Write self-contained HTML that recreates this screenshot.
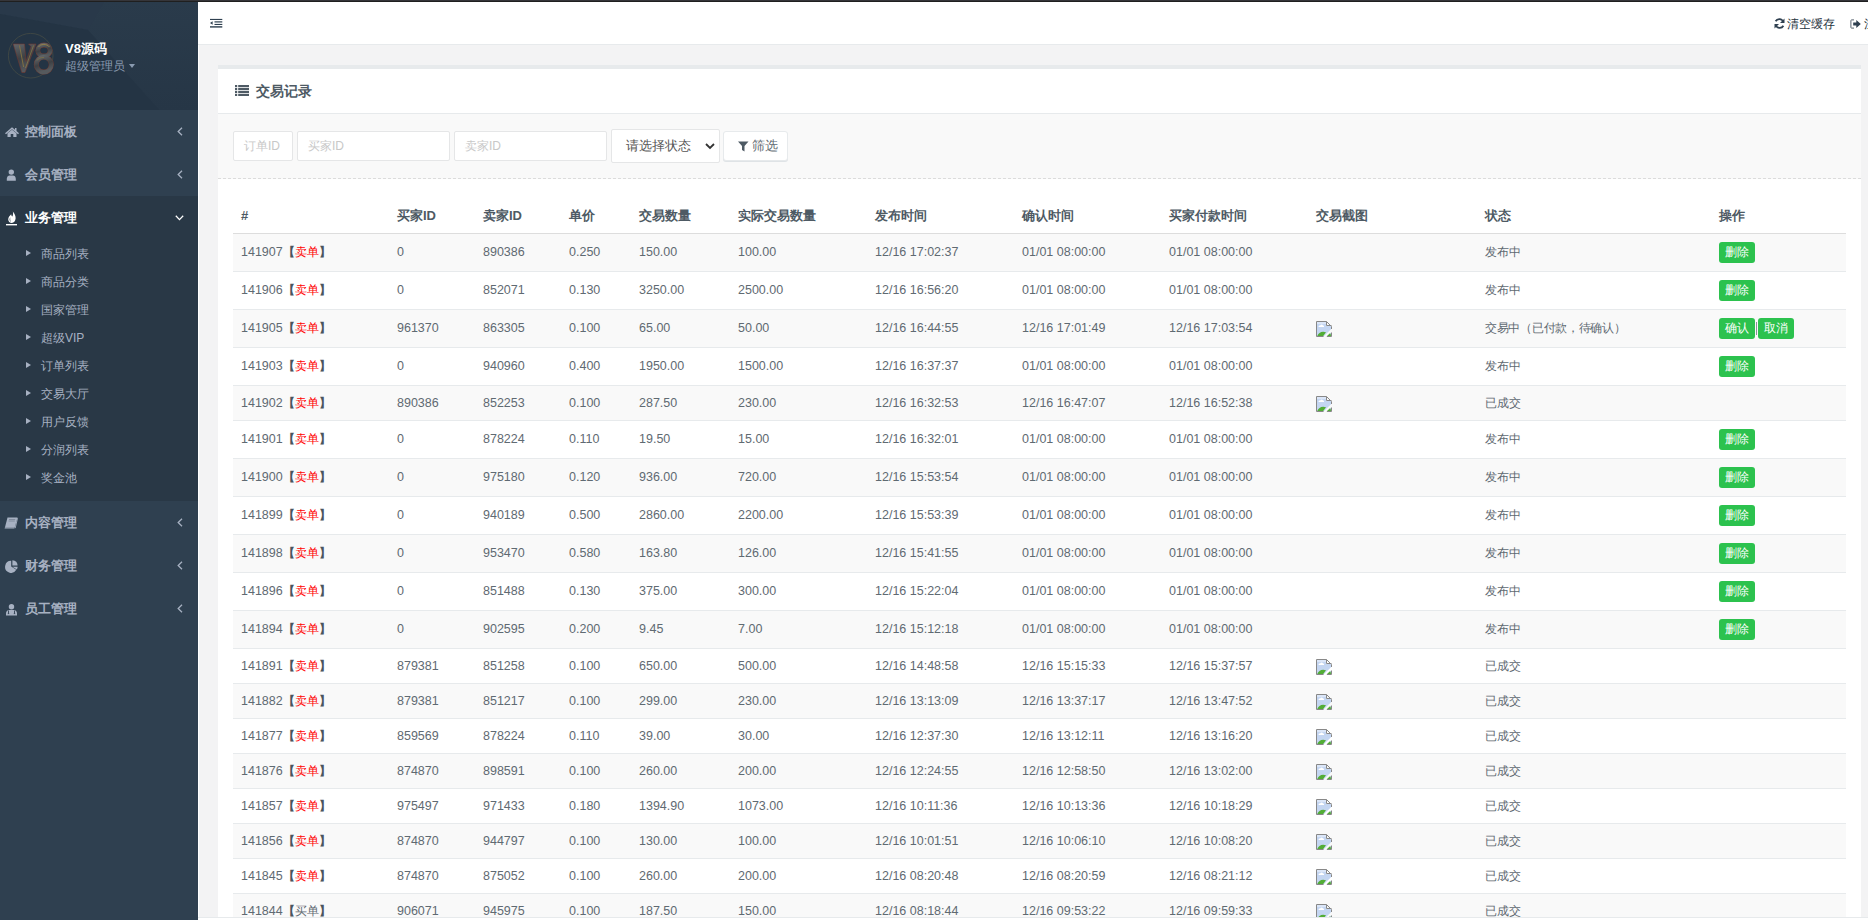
<!DOCTYPE html>
<html>
<head>
<meta charset="utf-8">
<style>
*{box-sizing:border-box;}
html,body{margin:0;padding:0;width:1868px;height:920px;overflow:hidden;background:#f3f3f4;font-family:"Liberation Sans",sans-serif;font-size:13px;color:#676a6c;}
#topline{position:absolute;left:0;top:0;width:1868px;height:2px;background:#1f1f1f;border-top:1px solid #353539;z-index:10;}
#side{position:absolute;left:0;top:0;width:198px;height:920px;background:#2f4050;}
#sidehead{position:absolute;left:0;top:0;width:198px;height:110px;background:#253545;overflow:hidden;}
#nav{position:absolute;left:198px;top:0;width:1670px;height:45px;background:#fff;border-bottom:1px solid #e7eaec;}
#wline{position:absolute;left:198px;top:45px;width:1px;height:875px;background:#fff;}
#footer{position:absolute;left:198px;top:917px;width:1670px;height:3px;background:#fff;border-top:1px solid #e7eaec;z-index:5;}
.menu{position:absolute;left:0;width:198px;height:43px;}
.menu .t{position:absolute;left:25px;top:0;line-height:43px;font-size:13px;font-weight:bold;color:#a7b1c2;}
.menu .ar{position:absolute;left:177px;top:17px;}
.menu .ic{position:absolute;left:5px;top:15px;}
#sub{position:absolute;left:0;top:196px;width:198px;height:305px;background:#293846;}
.si{position:absolute;left:0;width:198px;height:28px;}
.si .tri{position:absolute;left:26px;top:11px;width:0;height:0;border-left:5px solid #a7b1c2;border-top:3.5px solid transparent;border-bottom:3.5px solid transparent;}
.si .t{position:absolute;left:41px;top:1px;line-height:28px;font-size:12px;color:#a7b1c2;}
#card{position:absolute;left:218px;top:65px;width:1643px;height:860px;background:#fff;border-top:4px solid #e7eaec;}
#ctitle{position:absolute;left:0;top:0;width:100%;height:45px;border-bottom:1px solid #e7eaec;}
#ctitle .t{position:absolute;left:38px;top:0;line-height:44px;font-size:14px;font-weight:bold;color:#4e5a64;}
#filter{position:absolute;left:0;top:45px;width:100%;height:65px;background:#f9f9f9;border-bottom:1px dashed #dcdcdc;}
.inp{position:absolute;top:17px;height:30px;background:#fff;border:1px solid #e5e6e7;border-radius:2px;font-size:12px;color:#c8c8c8;padding-left:10px;line-height:28px;}
.sel{position:absolute;top:15px;height:34px;background:#fff;border:1px solid #e5e6e7;border-radius:2px;font-size:13px;color:#555;padding-left:14px;line-height:31px;}
.fbtn{position:absolute;top:17px;height:30px;background:#fff;border:1px solid #e7eaec;border-radius:3px;font-size:13px;color:#5f6a72;line-height:28px;box-shadow:0 1px 0 #dfe3e6;}
.thead .th{position:absolute;top:197px;line-height:38px;font-weight:bold;color:#4e5a64;white-space:nowrap;}
#hline{position:absolute;left:233px;top:233px;width:1613px;height:1px;background:#dddddd;}
.row{position:absolute;left:233px;width:1613px;border-bottom:1px solid #e7eaec;background:#fff;}
.row.odd{background:#f9f9f9;}
.td{position:absolute;top:0;white-space:nowrap;color:#5f6a72;font-size:12.5px;}
.cj{font-size:12px;}
.bk{font-weight:bold;color:#4a555e;}

.red{color:#ff0000;}
.btn{display:inline-block;height:21px;line-height:21px;padding:0 6px;background:#2cc24e;color:#fff;font-size:12px;border-radius:3px;vertical-align:middle;}
.sep{display:inline-block;width:1px;height:13px;background:#8a9098;margin:0 1px 0 1px;vertical-align:middle;}
.bi{display:inline-block;width:16px;height:16px;vertical-align:middle;}
</style>
</head>
<body>
<div id="side">
  <div id="sidehead">
    <svg width="198" height="110" style="position:absolute;left:0;top:0">
      <defs><linearGradient id="hg" x1="0" y1="0" x2="0" y2="1"><stop offset="0" stop-color="#2a3b4b"/><stop offset="1" stop-color="#263646"/></linearGradient></defs>
      <rect x="0" y="0" width="198" height="110" fill="url(#hg)"/>
      <polygon points="0,0 105,0 88,30 0,14" fill="#29394a"/>
      <polygon points="0,14 88,30 159,110 0,110" fill="#243444"/>
    </svg>
    <svg width="60" height="60" viewBox="0 0 60 60" style="position:absolute;left:0;top:25px">
<defs><linearGradient id="lg" x1="0" y1="0" x2="0.3" y2="1"><stop offset="0" stop-color="#62666a"/><stop offset="0.55" stop-color="#3d4044"/><stop offset="1" stop-color="#55595d"/></linearGradient></defs>
<circle cx="30.7" cy="30.7" r="22.3" fill="none" stroke="#454b45" stroke-width="0.8"/>
<path d="M13.2 19H24.5L26 36.5L31 21.5L28.5 19H36L25 47.5H21.8Z" fill="url(#lg)" stroke="#7d352b" stroke-width="0.5"/>
<path d="M19.5 20.5L23.6 42" stroke="#8f7a3e" stroke-width="0.8"/>
<path d="M33.5 20.5L25.5 43" stroke="#a08640" stroke-width="0.6"/>
<ellipse cx="44" cy="25.5" rx="6.2" ry="5.5" fill="none" stroke="#6e3a30" stroke-width="4.8"/>
<ellipse cx="43.8" cy="39.6" rx="7.5" ry="7.5" fill="none" stroke="#6e3a30" stroke-width="5"/>
<ellipse cx="44" cy="25.5" rx="6.2" ry="5.5" fill="none" stroke="url(#lg)" stroke-width="4"/>
<ellipse cx="43.8" cy="39.6" rx="7.5" ry="7.5" fill="none" stroke="url(#lg)" stroke-width="4.2"/>
<path d="M38.5 22C40 18.8 47 18.5 49.5 22" fill="none" stroke="#a08640" stroke-width="0.8"/>
<path d="M37 35.5C38.5 33 41 32.5 44 32.5" fill="none" stroke="#8f7a3e" stroke-width="0.6"/>
</svg>
    <div style="position:absolute;left:65px;top:40px;font-size:13px;font-weight:bold;color:#fff;">V8源码</div>
    <div style="position:absolute;left:65px;top:58px;font-size:12px;color:#8a9bb0;">超级管理员</div>
    <div style="position:absolute;left:129px;top:64px;width:0;height:0;border-left:3.5px solid transparent;border-right:3.5px solid transparent;border-top:4px solid #8a9bb0;"></div>
  </div>
  <div class="menu" style="top:110px"><svg class="ic" width="14" height="11" viewBox="0 0 14 11" style="left:5px;top:17px"><path d="M7 0.3L0 6.2L1 7.2L7 2.2L13 7.2L14 6.2L11.5 4V1H10V2.8Z" fill="#a7b1c2"/><path d="M2.5 6.3L7 2.8L11.5 6.3V10H8.3V7H5.7V10H2.5Z" fill="#a7b1c2"/></svg><span class="t">控制面板</span><svg class="ar" width="6" height="9" viewBox="0 0 6 9"><path d="M5 0.8L1.2 4.5L5 8.2" fill="none" stroke="#a7b1c2" stroke-width="1.3"/></svg></div>
  <div class="menu" style="top:153px"><svg class="ic" width="11" height="12" viewBox="0 0 11 12" style="left:6px;top:16px"><circle cx="5.3" cy="3.1" r="2.7" fill="#a7b1c2"/><path d="M0.8 11.8V9.8C0.8 7.6 2.2 6.4 3.6 6.4H7C8.4 6.4 9.8 7.6 9.8 9.8V11.8Z" fill="#a7b1c2"/></svg><span class="t">会员管理</span><svg class="ar" width="6" height="9" viewBox="0 0 6 9"><path d="M5 0.8L1.2 4.5L5 8.2" fill="none" stroke="#a7b1c2" stroke-width="1.3"/></svg></div>
  <div id="sub"></div>
  <div class="menu" style="top:196px"><svg class="ic" width="12" height="15" viewBox="0 0 12 15" style="left:6px;top:15px"><path d="M6.8 0.5C8.8 2.8 9.8 5 9.6 7.6C9.4 10.2 7.8 11.9 5.8 11.9C3.9 11.9 2.2 10.4 2.2 8.2C2.2 5.8 4.2 4.5 5.2 3.2C5.2 4.3 5.8 5.1 6.4 5.6C7.2 4 7.3 2.2 6.8 0.5Z" fill="#fff"/><path d="M4.3 6.2C3.3 7.6 3.2 9.8 5 11.3C4.1 9.6 4.1 7.8 4.3 6.2Z" fill="#293846"/><rect x="0" y="13" width="11" height="1.4" fill="#fff"/></svg><span class="t" style="color:#fff">业务管理</span><svg class="ar" width="9" height="6" viewBox="0 0 9 6" style="left:175px;top:19px"><path d="M0.8 0.8L4.5 4.6L8.2 0.8" fill="none" stroke="#fff" stroke-width="1.3"/></svg></div>
  <div class="si" style="top:239px"><span class="tri"></span><span class="t">商品列表</span></div>
  <div class="si" style="top:267px"><span class="tri"></span><span class="t">商品分类</span></div>
  <div class="si" style="top:295px"><span class="tri"></span><span class="t">国家管理</span></div>
  <div class="si" style="top:323px"><span class="tri"></span><span class="t">超级VIP</span></div>
  <div class="si" style="top:351px"><span class="tri"></span><span class="t">订单列表</span></div>
  <div class="si" style="top:379px"><span class="tri"></span><span class="t">交易大厅</span></div>
  <div class="si" style="top:407px"><span class="tri"></span><span class="t">用户反馈</span></div>
  <div class="si" style="top:435px"><span class="tri"></span><span class="t">分润列表</span></div>
  <div class="si" style="top:463px"><span class="tri"></span><span class="t">奖金池</span></div>
  <div class="menu" style="top:501px"><svg class="ic" width="14" height="12" viewBox="0 0 14 12" style="left:4px;top:16px"><path d="M3.5 0.5H13.5L10.8 10.2H1Z" fill="#a7b1c2"/><path d="M1 10.2H10.8L10.3 11.5H0.6Z" fill="#a7b1c2"/><path d="M5 2.5H11.2M4.6 4H10.8" stroke="#7d8899" stroke-width="0.9"/><path d="M13.5 1.2L11.2 11.2" stroke="#a7b1c2" stroke-width="0.9"/></svg><span class="t">内容管理</span><svg class="ar" width="6" height="9" viewBox="0 0 6 9"><path d="M5 0.8L1.2 4.5L5 8.2" fill="none" stroke="#a7b1c2" stroke-width="1.3"/></svg></div>
  <div class="menu" style="top:544px"><svg class="ic" width="14" height="13" viewBox="0 0 14 13" style="left:5px;top:16px"><path d="M6.2 0.8A6 6 0 1 0 11.3 9.8L6.2 6.6Z" fill="#a7b1c2"/><path d="M7.4 0.2V5.6L12.6 5.6A5.6 5.6 0 0 0 7.4 0.2Z" fill="#a7b1c2"/><path d="M7.4 6.8L12.6 6.8A5.6 5.6 0 0 1 11.8 9.6Z" fill="#a7b1c2"/></svg><span class="t">财务管理</span><svg class="ar" width="6" height="9" viewBox="0 0 6 9"><path d="M5 0.8L1.2 4.5L5 8.2" fill="none" stroke="#a7b1c2" stroke-width="1.3"/></svg></div>
  <div class="menu" style="top:587px"><svg class="ic" width="11" height="12" viewBox="0 0 11 12" style="left:6px;top:17px"><circle cx="5.5" cy="2.8" r="2.7" fill="#a7b1c2"/><path d="M0 11.5V9.3C0 7.3 1.5 6 3 6H8C9.5 6 11 7.3 11 9.3V11.5Z" fill="#a7b1c2"/><path d="M2.5 6.5V9.5M8.5 6.5V9.5M1.8 9.6H3.2M7.8 9.6H9.2" stroke="#2f4050" stroke-width="0.9" fill="none"/></svg><span class="t">员工管理</span><svg class="ar" width="6" height="9" viewBox="0 0 6 9"><path d="M5 0.8L1.2 4.5L5 8.2" fill="none" stroke="#a7b1c2" stroke-width="1.3"/></svg></div>
</div>
<div id="topline"></div>
<div id="nav">
  <svg width="13" height="11" viewBox="0 0 13 11" style="position:absolute;left:12px;top:18px"><rect x="0" y="0.9" width="12.3" height="1.1" fill="#2f4050"/><rect x="4.5" y="3.3" width="7.8" height="1.2" fill="#2f4050"/><rect x="4.5" y="5.9" width="7.8" height="1.1" fill="#2f4050"/><rect x="0" y="8.2" width="12.3" height="1.4" fill="#2f4050"/><path d="M0 5L2.6 3.2V6.8Z" fill="#2f4050"/></svg>
  <svg width="11" height="11" viewBox="0 0 11 11" style="position:absolute;left:1576px;top:18px"><path d="M9.2 3.8A4.2 4.2 0 0 0 1.6 3.2" fill="none" stroke="#2f4050" stroke-width="1.8"/><path d="M10.5 0.5V5H6Z" fill="#2f4050"/><path d="M1.8 7.2A4.2 4.2 0 0 0 9.4 7.8" fill="none" stroke="#2f4050" stroke-width="1.8"/><path d="M0.5 10.5V6H5Z" fill="#2f4050"/></svg>
  <svg width="11" height="10" viewBox="0 0 11 10" style="position:absolute;left:1652px;top:19px"><path d="M4 0.9H1.5C1.1 0.9 0.9 1.1 0.9 1.5V8.5C0.9 8.9 1.1 9.1 1.5 9.1H4" fill="none" stroke="#5a6570" stroke-width="1"/><path d="M3.2 3.6H6.3V1L10.8 5L6.3 9V6.4H3.2Z" fill="#2f4050"/></svg>
  <div style="position:absolute;left:1666px;top:2px;line-height:45px;font-size:12px;color:#263340;white-space:nowrap;">注销</div>
  <div style="position:absolute;left:1589px;top:2px;line-height:45px;font-size:12px;color:#263340;white-space:nowrap;">清空缓存</div>
</div>
<div id="wline"></div>
<div id="card">
  <div id="ctitle"><svg width="14" height="11" viewBox="0 0 14 11" style="position:absolute;left:17px;top:16px"><rect x="0" y="0" width="2.2" height="2.2" fill="#4e5a64"/><rect x="3.2" y="0" width="10.8" height="2.2" fill="#4e5a64"/><rect x="0" y="3" width="2.2" height="2.2" fill="#4e5a64"/><rect x="3.2" y="3" width="10.8" height="2.2" fill="#4e5a64"/><rect x="0" y="6" width="2.2" height="2.2" fill="#4e5a64"/><rect x="3.2" y="6" width="10.8" height="2.2" fill="#4e5a64"/><rect x="0" y="9" width="2.2" height="2.2" fill="#4e5a64"/><rect x="3.2" y="9" width="10.8" height="2.2" fill="#4e5a64"/></svg><span class="t">交易记录</span></div>
  <div id="filter">
    <div class="inp" style="left:15px;width:60px;">订单ID</div>
    <div class="inp" style="left:79px;width:153px;">买家ID</div>
    <div class="inp" style="left:236px;width:153px;">卖家ID</div>
    <div class="sel" style="left:393px;width:109px;">请选择状态<svg width="10" height="7" viewBox="0 0 10 7" style="position:absolute;left:93px;top:13px"><path d="M1 1L5 5L9 1" fill="none" stroke="#333" stroke-width="1.8"/></svg></div>
    <div class="fbtn" style="left:505px;width:65px;"><svg width="11" height="11" viewBox="0 0 11 11" style="position:absolute;left:14px;top:9px"><path d="M0 0.5H10.5L6.5 5V10.5L4 9V5Z" fill="#4e5a64"/></svg><span style="position:absolute;left:28px;top:0;">筛选</span></div>
  </div>
</div>
<div class="thead">
<div class="th" style="left:241px">#</div>
<div class="th" style="left:397px">买家ID</div>
<div class="th" style="left:483px">卖家ID</div>
<div class="th" style="left:569px">单价</div>
<div class="th" style="left:639px">交易数量</div>
<div class="th" style="left:738px">实际交易数量</div>
<div class="th" style="left:875px">发布时间</div>
<div class="th" style="left:1022px">确认时间</div>
<div class="th" style="left:1169px">买家付款时间</div>
<div class="th" style="left:1316px">交易截图</div>
<div class="th" style="left:1485px">状态</div>
<div class="th" style="left:1719px">操作</div>
</div>
<div class="row odd" style="top:234px;height:38px">
<div class="td" style="left:8px;line-height:37px">141907<span class="cj"><span class="bk">【</span><span class="red">卖单</span><span class="bk">】</span></span></div>
<div class="td" style="left:164px;line-height:37px">0</div>
<div class="td" style="left:250px;line-height:37px">890386</div>
<div class="td" style="left:336px;line-height:37px">0.250</div>
<div class="td" style="left:406px;line-height:37px">150.00</div>
<div class="td" style="left:505px;line-height:37px">100.00</div>
<div class="td" style="left:642px;line-height:37px">12/16 17:02:37</div>
<div class="td" style="left:789px;line-height:37px">01/01 08:00:00</div>
<div class="td" style="left:936px;line-height:37px">01/01 08:00:00</div>
<div class="td" style="left:1083px;line-height:37px"></div>
<div class="td" style="left:1252px;line-height:37px"><span class="cj">发布中</span></div>
<div class="td" style="left:1486px;line-height:37px"><span class="btn">删除</span></div>
</div>
<div class="row" style="top:272px;height:38px">
<div class="td" style="left:8px;line-height:37px">141906<span class="cj"><span class="bk">【</span><span class="red">卖单</span><span class="bk">】</span></span></div>
<div class="td" style="left:164px;line-height:37px">0</div>
<div class="td" style="left:250px;line-height:37px">852071</div>
<div class="td" style="left:336px;line-height:37px">0.130</div>
<div class="td" style="left:406px;line-height:37px">3250.00</div>
<div class="td" style="left:505px;line-height:37px">2500.00</div>
<div class="td" style="left:642px;line-height:37px">12/16 16:56:20</div>
<div class="td" style="left:789px;line-height:37px">01/01 08:00:00</div>
<div class="td" style="left:936px;line-height:37px">01/01 08:00:00</div>
<div class="td" style="left:1083px;line-height:37px"></div>
<div class="td" style="left:1252px;line-height:37px"><span class="cj">发布中</span></div>
<div class="td" style="left:1486px;line-height:37px"><span class="btn">删除</span></div>
</div>
<div class="row odd" style="top:310px;height:38px">
<div class="td" style="left:8px;line-height:37px">141905<span class="cj"><span class="bk">【</span><span class="red">卖单</span><span class="bk">】</span></span></div>
<div class="td" style="left:164px;line-height:37px">961370</div>
<div class="td" style="left:250px;line-height:37px">863305</div>
<div class="td" style="left:336px;line-height:37px">0.100</div>
<div class="td" style="left:406px;line-height:37px">65.00</div>
<div class="td" style="left:505px;line-height:37px">50.00</div>
<div class="td" style="left:642px;line-height:37px">12/16 16:44:55</div>
<div class="td" style="left:789px;line-height:37px">12/16 17:01:49</div>
<div class="td" style="left:936px;line-height:37px">12/16 17:03:54</div>
<div class="td" style="left:1083px;line-height:37px"><svg class="bi" width="16" height="16" viewBox="0 0 16 16"><path d="M1 1H10V5H15V8.3L7.5 15.5H1Z" fill="#c4d6f2"/><path d="M1 1H10V3H1Z" fill="#dbe6f8"/><path d="M15 11.5V15H11.5Z" fill="#c4d6f2"/><path d="M2.5 6C2.5 4.8 3.5 4.5 4.2 4.6C4.6 3.2 6.5 3.2 7 4.6C7.8 4.6 8.3 5.3 8 6Z" fill="#fff"/><path d="M1 15.5C2.5 11.5 6 9.8 10 11.3L6.8 15.5Z" fill="#52ad35"/><path d="M10.5 15.5L14 12.3C14.6 13 15 14 15 15.5Z" fill="#52ad35"/><path d="M7.5 15.5H0.5V0.5H10.5L15.5 5.5V8" fill="none" stroke="#888" stroke-width="1"/><path d="M15.5 11.5V15.5H11" fill="none" stroke="#888" stroke-width="1"/><path d="M10.5 0.5V4.5H15.5" fill="none" stroke="#888" stroke-width="1"/></svg></div>
<div class="td" style="left:1252px;line-height:37px"><span class="cj" style="letter-spacing:-0.3px">交易中（已付款，待确认）</span></div>
<div class="td" style="left:1486px;line-height:37px"><span class="btn">确认</span><span class="sep"></span><span class="btn">取消</span></div>
</div>
<div class="row" style="top:348px;height:38px">
<div class="td" style="left:8px;line-height:37px">141903<span class="cj"><span class="bk">【</span><span class="red">卖单</span><span class="bk">】</span></span></div>
<div class="td" style="left:164px;line-height:37px">0</div>
<div class="td" style="left:250px;line-height:37px">940960</div>
<div class="td" style="left:336px;line-height:37px">0.400</div>
<div class="td" style="left:406px;line-height:37px">1950.00</div>
<div class="td" style="left:505px;line-height:37px">1500.00</div>
<div class="td" style="left:642px;line-height:37px">12/16 16:37:37</div>
<div class="td" style="left:789px;line-height:37px">01/01 08:00:00</div>
<div class="td" style="left:936px;line-height:37px">01/01 08:00:00</div>
<div class="td" style="left:1083px;line-height:37px"></div>
<div class="td" style="left:1252px;line-height:37px"><span class="cj">发布中</span></div>
<div class="td" style="left:1486px;line-height:37px"><span class="btn">删除</span></div>
</div>
<div class="row odd n" style="top:386px;height:35px">
<div class="td" style="left:8px;line-height:34px">141902<span class="cj"><span class="bk">【</span><span class="red">卖单</span><span class="bk">】</span></span></div>
<div class="td" style="left:164px;line-height:34px">890386</div>
<div class="td" style="left:250px;line-height:34px">852253</div>
<div class="td" style="left:336px;line-height:34px">0.100</div>
<div class="td" style="left:406px;line-height:34px">287.50</div>
<div class="td" style="left:505px;line-height:34px">230.00</div>
<div class="td" style="left:642px;line-height:34px">12/16 16:32:53</div>
<div class="td" style="left:789px;line-height:34px">12/16 16:47:07</div>
<div class="td" style="left:936px;line-height:34px">12/16 16:52:38</div>
<div class="td" style="left:1083px;line-height:34px"><svg class="bi" width="16" height="16" viewBox="0 0 16 16"><path d="M1 1H10V5H15V8.3L7.5 15.5H1Z" fill="#c4d6f2"/><path d="M1 1H10V3H1Z" fill="#dbe6f8"/><path d="M15 11.5V15H11.5Z" fill="#c4d6f2"/><path d="M2.5 6C2.5 4.8 3.5 4.5 4.2 4.6C4.6 3.2 6.5 3.2 7 4.6C7.8 4.6 8.3 5.3 8 6Z" fill="#fff"/><path d="M1 15.5C2.5 11.5 6 9.8 10 11.3L6.8 15.5Z" fill="#52ad35"/><path d="M10.5 15.5L14 12.3C14.6 13 15 14 15 15.5Z" fill="#52ad35"/><path d="M7.5 15.5H0.5V0.5H10.5L15.5 5.5V8" fill="none" stroke="#888" stroke-width="1"/><path d="M15.5 11.5V15.5H11" fill="none" stroke="#888" stroke-width="1"/><path d="M10.5 0.5V4.5H15.5" fill="none" stroke="#888" stroke-width="1"/></svg></div>
<div class="td" style="left:1252px;line-height:34px"><span class="cj">已成交</span></div>
<div class="td" style="left:1486px;line-height:34px"></div>
</div>
<div class="row" style="top:421px;height:38px">
<div class="td" style="left:8px;line-height:37px">141901<span class="cj"><span class="bk">【</span><span class="red">卖单</span><span class="bk">】</span></span></div>
<div class="td" style="left:164px;line-height:37px">0</div>
<div class="td" style="left:250px;line-height:37px">878224</div>
<div class="td" style="left:336px;line-height:37px">0.110</div>
<div class="td" style="left:406px;line-height:37px">19.50</div>
<div class="td" style="left:505px;line-height:37px">15.00</div>
<div class="td" style="left:642px;line-height:37px">12/16 16:32:01</div>
<div class="td" style="left:789px;line-height:37px">01/01 08:00:00</div>
<div class="td" style="left:936px;line-height:37px">01/01 08:00:00</div>
<div class="td" style="left:1083px;line-height:37px"></div>
<div class="td" style="left:1252px;line-height:37px"><span class="cj">发布中</span></div>
<div class="td" style="left:1486px;line-height:37px"><span class="btn">删除</span></div>
</div>
<div class="row odd" style="top:459px;height:38px">
<div class="td" style="left:8px;line-height:37px">141900<span class="cj"><span class="bk">【</span><span class="red">卖单</span><span class="bk">】</span></span></div>
<div class="td" style="left:164px;line-height:37px">0</div>
<div class="td" style="left:250px;line-height:37px">975180</div>
<div class="td" style="left:336px;line-height:37px">0.120</div>
<div class="td" style="left:406px;line-height:37px">936.00</div>
<div class="td" style="left:505px;line-height:37px">720.00</div>
<div class="td" style="left:642px;line-height:37px">12/16 15:53:54</div>
<div class="td" style="left:789px;line-height:37px">01/01 08:00:00</div>
<div class="td" style="left:936px;line-height:37px">01/01 08:00:00</div>
<div class="td" style="left:1083px;line-height:37px"></div>
<div class="td" style="left:1252px;line-height:37px"><span class="cj">发布中</span></div>
<div class="td" style="left:1486px;line-height:37px"><span class="btn">删除</span></div>
</div>
<div class="row" style="top:497px;height:38px">
<div class="td" style="left:8px;line-height:37px">141899<span class="cj"><span class="bk">【</span><span class="red">卖单</span><span class="bk">】</span></span></div>
<div class="td" style="left:164px;line-height:37px">0</div>
<div class="td" style="left:250px;line-height:37px">940189</div>
<div class="td" style="left:336px;line-height:37px">0.500</div>
<div class="td" style="left:406px;line-height:37px">2860.00</div>
<div class="td" style="left:505px;line-height:37px">2200.00</div>
<div class="td" style="left:642px;line-height:37px">12/16 15:53:39</div>
<div class="td" style="left:789px;line-height:37px">01/01 08:00:00</div>
<div class="td" style="left:936px;line-height:37px">01/01 08:00:00</div>
<div class="td" style="left:1083px;line-height:37px"></div>
<div class="td" style="left:1252px;line-height:37px"><span class="cj">发布中</span></div>
<div class="td" style="left:1486px;line-height:37px"><span class="btn">删除</span></div>
</div>
<div class="row odd" style="top:535px;height:38px">
<div class="td" style="left:8px;line-height:37px">141898<span class="cj"><span class="bk">【</span><span class="red">卖单</span><span class="bk">】</span></span></div>
<div class="td" style="left:164px;line-height:37px">0</div>
<div class="td" style="left:250px;line-height:37px">953470</div>
<div class="td" style="left:336px;line-height:37px">0.580</div>
<div class="td" style="left:406px;line-height:37px">163.80</div>
<div class="td" style="left:505px;line-height:37px">126.00</div>
<div class="td" style="left:642px;line-height:37px">12/16 15:41:55</div>
<div class="td" style="left:789px;line-height:37px">01/01 08:00:00</div>
<div class="td" style="left:936px;line-height:37px">01/01 08:00:00</div>
<div class="td" style="left:1083px;line-height:37px"></div>
<div class="td" style="left:1252px;line-height:37px"><span class="cj">发布中</span></div>
<div class="td" style="left:1486px;line-height:37px"><span class="btn">删除</span></div>
</div>
<div class="row" style="top:573px;height:38px">
<div class="td" style="left:8px;line-height:37px">141896<span class="cj"><span class="bk">【</span><span class="red">卖单</span><span class="bk">】</span></span></div>
<div class="td" style="left:164px;line-height:37px">0</div>
<div class="td" style="left:250px;line-height:37px">851488</div>
<div class="td" style="left:336px;line-height:37px">0.130</div>
<div class="td" style="left:406px;line-height:37px">375.00</div>
<div class="td" style="left:505px;line-height:37px">300.00</div>
<div class="td" style="left:642px;line-height:37px">12/16 15:22:04</div>
<div class="td" style="left:789px;line-height:37px">01/01 08:00:00</div>
<div class="td" style="left:936px;line-height:37px">01/01 08:00:00</div>
<div class="td" style="left:1083px;line-height:37px"></div>
<div class="td" style="left:1252px;line-height:37px"><span class="cj">发布中</span></div>
<div class="td" style="left:1486px;line-height:37px"><span class="btn">删除</span></div>
</div>
<div class="row odd" style="top:611px;height:38px">
<div class="td" style="left:8px;line-height:37px">141894<span class="cj"><span class="bk">【</span><span class="red">卖单</span><span class="bk">】</span></span></div>
<div class="td" style="left:164px;line-height:37px">0</div>
<div class="td" style="left:250px;line-height:37px">902595</div>
<div class="td" style="left:336px;line-height:37px">0.200</div>
<div class="td" style="left:406px;line-height:37px">9.45</div>
<div class="td" style="left:505px;line-height:37px">7.00</div>
<div class="td" style="left:642px;line-height:37px">12/16 15:12:18</div>
<div class="td" style="left:789px;line-height:37px">01/01 08:00:00</div>
<div class="td" style="left:936px;line-height:37px">01/01 08:00:00</div>
<div class="td" style="left:1083px;line-height:37px"></div>
<div class="td" style="left:1252px;line-height:37px"><span class="cj">发布中</span></div>
<div class="td" style="left:1486px;line-height:37px"><span class="btn">删除</span></div>
</div>
<div class="row n" style="top:649px;height:35px">
<div class="td" style="left:8px;line-height:34px">141891<span class="cj"><span class="bk">【</span><span class="red">卖单</span><span class="bk">】</span></span></div>
<div class="td" style="left:164px;line-height:34px">879381</div>
<div class="td" style="left:250px;line-height:34px">851258</div>
<div class="td" style="left:336px;line-height:34px">0.100</div>
<div class="td" style="left:406px;line-height:34px">650.00</div>
<div class="td" style="left:505px;line-height:34px">500.00</div>
<div class="td" style="left:642px;line-height:34px">12/16 14:48:58</div>
<div class="td" style="left:789px;line-height:34px">12/16 15:15:33</div>
<div class="td" style="left:936px;line-height:34px">12/16 15:37:57</div>
<div class="td" style="left:1083px;line-height:34px"><svg class="bi" width="16" height="16" viewBox="0 0 16 16"><path d="M1 1H10V5H15V8.3L7.5 15.5H1Z" fill="#c4d6f2"/><path d="M1 1H10V3H1Z" fill="#dbe6f8"/><path d="M15 11.5V15H11.5Z" fill="#c4d6f2"/><path d="M2.5 6C2.5 4.8 3.5 4.5 4.2 4.6C4.6 3.2 6.5 3.2 7 4.6C7.8 4.6 8.3 5.3 8 6Z" fill="#fff"/><path d="M1 15.5C2.5 11.5 6 9.8 10 11.3L6.8 15.5Z" fill="#52ad35"/><path d="M10.5 15.5L14 12.3C14.6 13 15 14 15 15.5Z" fill="#52ad35"/><path d="M7.5 15.5H0.5V0.5H10.5L15.5 5.5V8" fill="none" stroke="#888" stroke-width="1"/><path d="M15.5 11.5V15.5H11" fill="none" stroke="#888" stroke-width="1"/><path d="M10.5 0.5V4.5H15.5" fill="none" stroke="#888" stroke-width="1"/></svg></div>
<div class="td" style="left:1252px;line-height:34px"><span class="cj">已成交</span></div>
<div class="td" style="left:1486px;line-height:34px"></div>
</div>
<div class="row odd n" style="top:684px;height:35px">
<div class="td" style="left:8px;line-height:34px">141882<span class="cj"><span class="bk">【</span><span class="red">卖单</span><span class="bk">】</span></span></div>
<div class="td" style="left:164px;line-height:34px">879381</div>
<div class="td" style="left:250px;line-height:34px">851217</div>
<div class="td" style="left:336px;line-height:34px">0.100</div>
<div class="td" style="left:406px;line-height:34px">299.00</div>
<div class="td" style="left:505px;line-height:34px">230.00</div>
<div class="td" style="left:642px;line-height:34px">12/16 13:13:09</div>
<div class="td" style="left:789px;line-height:34px">12/16 13:37:17</div>
<div class="td" style="left:936px;line-height:34px">12/16 13:47:52</div>
<div class="td" style="left:1083px;line-height:34px"><svg class="bi" width="16" height="16" viewBox="0 0 16 16"><path d="M1 1H10V5H15V8.3L7.5 15.5H1Z" fill="#c4d6f2"/><path d="M1 1H10V3H1Z" fill="#dbe6f8"/><path d="M15 11.5V15H11.5Z" fill="#c4d6f2"/><path d="M2.5 6C2.5 4.8 3.5 4.5 4.2 4.6C4.6 3.2 6.5 3.2 7 4.6C7.8 4.6 8.3 5.3 8 6Z" fill="#fff"/><path d="M1 15.5C2.5 11.5 6 9.8 10 11.3L6.8 15.5Z" fill="#52ad35"/><path d="M10.5 15.5L14 12.3C14.6 13 15 14 15 15.5Z" fill="#52ad35"/><path d="M7.5 15.5H0.5V0.5H10.5L15.5 5.5V8" fill="none" stroke="#888" stroke-width="1"/><path d="M15.5 11.5V15.5H11" fill="none" stroke="#888" stroke-width="1"/><path d="M10.5 0.5V4.5H15.5" fill="none" stroke="#888" stroke-width="1"/></svg></div>
<div class="td" style="left:1252px;line-height:34px"><span class="cj">已成交</span></div>
<div class="td" style="left:1486px;line-height:34px"></div>
</div>
<div class="row n" style="top:719px;height:35px">
<div class="td" style="left:8px;line-height:34px">141877<span class="cj"><span class="bk">【</span><span class="red">卖单</span><span class="bk">】</span></span></div>
<div class="td" style="left:164px;line-height:34px">859569</div>
<div class="td" style="left:250px;line-height:34px">878224</div>
<div class="td" style="left:336px;line-height:34px">0.110</div>
<div class="td" style="left:406px;line-height:34px">39.00</div>
<div class="td" style="left:505px;line-height:34px">30.00</div>
<div class="td" style="left:642px;line-height:34px">12/16 12:37:30</div>
<div class="td" style="left:789px;line-height:34px">12/16 13:12:11</div>
<div class="td" style="left:936px;line-height:34px">12/16 13:16:20</div>
<div class="td" style="left:1083px;line-height:34px"><svg class="bi" width="16" height="16" viewBox="0 0 16 16"><path d="M1 1H10V5H15V8.3L7.5 15.5H1Z" fill="#c4d6f2"/><path d="M1 1H10V3H1Z" fill="#dbe6f8"/><path d="M15 11.5V15H11.5Z" fill="#c4d6f2"/><path d="M2.5 6C2.5 4.8 3.5 4.5 4.2 4.6C4.6 3.2 6.5 3.2 7 4.6C7.8 4.6 8.3 5.3 8 6Z" fill="#fff"/><path d="M1 15.5C2.5 11.5 6 9.8 10 11.3L6.8 15.5Z" fill="#52ad35"/><path d="M10.5 15.5L14 12.3C14.6 13 15 14 15 15.5Z" fill="#52ad35"/><path d="M7.5 15.5H0.5V0.5H10.5L15.5 5.5V8" fill="none" stroke="#888" stroke-width="1"/><path d="M15.5 11.5V15.5H11" fill="none" stroke="#888" stroke-width="1"/><path d="M10.5 0.5V4.5H15.5" fill="none" stroke="#888" stroke-width="1"/></svg></div>
<div class="td" style="left:1252px;line-height:34px"><span class="cj">已成交</span></div>
<div class="td" style="left:1486px;line-height:34px"></div>
</div>
<div class="row odd n" style="top:754px;height:35px">
<div class="td" style="left:8px;line-height:34px">141876<span class="cj"><span class="bk">【</span><span class="red">卖单</span><span class="bk">】</span></span></div>
<div class="td" style="left:164px;line-height:34px">874870</div>
<div class="td" style="left:250px;line-height:34px">898591</div>
<div class="td" style="left:336px;line-height:34px">0.100</div>
<div class="td" style="left:406px;line-height:34px">260.00</div>
<div class="td" style="left:505px;line-height:34px">200.00</div>
<div class="td" style="left:642px;line-height:34px">12/16 12:24:55</div>
<div class="td" style="left:789px;line-height:34px">12/16 12:58:50</div>
<div class="td" style="left:936px;line-height:34px">12/16 13:02:00</div>
<div class="td" style="left:1083px;line-height:34px"><svg class="bi" width="16" height="16" viewBox="0 0 16 16"><path d="M1 1H10V5H15V8.3L7.5 15.5H1Z" fill="#c4d6f2"/><path d="M1 1H10V3H1Z" fill="#dbe6f8"/><path d="M15 11.5V15H11.5Z" fill="#c4d6f2"/><path d="M2.5 6C2.5 4.8 3.5 4.5 4.2 4.6C4.6 3.2 6.5 3.2 7 4.6C7.8 4.6 8.3 5.3 8 6Z" fill="#fff"/><path d="M1 15.5C2.5 11.5 6 9.8 10 11.3L6.8 15.5Z" fill="#52ad35"/><path d="M10.5 15.5L14 12.3C14.6 13 15 14 15 15.5Z" fill="#52ad35"/><path d="M7.5 15.5H0.5V0.5H10.5L15.5 5.5V8" fill="none" stroke="#888" stroke-width="1"/><path d="M15.5 11.5V15.5H11" fill="none" stroke="#888" stroke-width="1"/><path d="M10.5 0.5V4.5H15.5" fill="none" stroke="#888" stroke-width="1"/></svg></div>
<div class="td" style="left:1252px;line-height:34px"><span class="cj">已成交</span></div>
<div class="td" style="left:1486px;line-height:34px"></div>
</div>
<div class="row n" style="top:789px;height:35px">
<div class="td" style="left:8px;line-height:34px">141857<span class="cj"><span class="bk">【</span><span class="red">卖单</span><span class="bk">】</span></span></div>
<div class="td" style="left:164px;line-height:34px">975497</div>
<div class="td" style="left:250px;line-height:34px">971433</div>
<div class="td" style="left:336px;line-height:34px">0.180</div>
<div class="td" style="left:406px;line-height:34px">1394.90</div>
<div class="td" style="left:505px;line-height:34px">1073.00</div>
<div class="td" style="left:642px;line-height:34px">12/16 10:11:36</div>
<div class="td" style="left:789px;line-height:34px">12/16 10:13:36</div>
<div class="td" style="left:936px;line-height:34px">12/16 10:18:29</div>
<div class="td" style="left:1083px;line-height:34px"><svg class="bi" width="16" height="16" viewBox="0 0 16 16"><path d="M1 1H10V5H15V8.3L7.5 15.5H1Z" fill="#c4d6f2"/><path d="M1 1H10V3H1Z" fill="#dbe6f8"/><path d="M15 11.5V15H11.5Z" fill="#c4d6f2"/><path d="M2.5 6C2.5 4.8 3.5 4.5 4.2 4.6C4.6 3.2 6.5 3.2 7 4.6C7.8 4.6 8.3 5.3 8 6Z" fill="#fff"/><path d="M1 15.5C2.5 11.5 6 9.8 10 11.3L6.8 15.5Z" fill="#52ad35"/><path d="M10.5 15.5L14 12.3C14.6 13 15 14 15 15.5Z" fill="#52ad35"/><path d="M7.5 15.5H0.5V0.5H10.5L15.5 5.5V8" fill="none" stroke="#888" stroke-width="1"/><path d="M15.5 11.5V15.5H11" fill="none" stroke="#888" stroke-width="1"/><path d="M10.5 0.5V4.5H15.5" fill="none" stroke="#888" stroke-width="1"/></svg></div>
<div class="td" style="left:1252px;line-height:34px"><span class="cj">已成交</span></div>
<div class="td" style="left:1486px;line-height:34px"></div>
</div>
<div class="row odd n" style="top:824px;height:35px">
<div class="td" style="left:8px;line-height:34px">141856<span class="cj"><span class="bk">【</span><span class="red">卖单</span><span class="bk">】</span></span></div>
<div class="td" style="left:164px;line-height:34px">874870</div>
<div class="td" style="left:250px;line-height:34px">944797</div>
<div class="td" style="left:336px;line-height:34px">0.100</div>
<div class="td" style="left:406px;line-height:34px">130.00</div>
<div class="td" style="left:505px;line-height:34px">100.00</div>
<div class="td" style="left:642px;line-height:34px">12/16 10:01:51</div>
<div class="td" style="left:789px;line-height:34px">12/16 10:06:10</div>
<div class="td" style="left:936px;line-height:34px">12/16 10:08:20</div>
<div class="td" style="left:1083px;line-height:34px"><svg class="bi" width="16" height="16" viewBox="0 0 16 16"><path d="M1 1H10V5H15V8.3L7.5 15.5H1Z" fill="#c4d6f2"/><path d="M1 1H10V3H1Z" fill="#dbe6f8"/><path d="M15 11.5V15H11.5Z" fill="#c4d6f2"/><path d="M2.5 6C2.5 4.8 3.5 4.5 4.2 4.6C4.6 3.2 6.5 3.2 7 4.6C7.8 4.6 8.3 5.3 8 6Z" fill="#fff"/><path d="M1 15.5C2.5 11.5 6 9.8 10 11.3L6.8 15.5Z" fill="#52ad35"/><path d="M10.5 15.5L14 12.3C14.6 13 15 14 15 15.5Z" fill="#52ad35"/><path d="M7.5 15.5H0.5V0.5H10.5L15.5 5.5V8" fill="none" stroke="#888" stroke-width="1"/><path d="M15.5 11.5V15.5H11" fill="none" stroke="#888" stroke-width="1"/><path d="M10.5 0.5V4.5H15.5" fill="none" stroke="#888" stroke-width="1"/></svg></div>
<div class="td" style="left:1252px;line-height:34px"><span class="cj">已成交</span></div>
<div class="td" style="left:1486px;line-height:34px"></div>
</div>
<div class="row n" style="top:859px;height:35px">
<div class="td" style="left:8px;line-height:34px">141845<span class="cj"><span class="bk">【</span><span class="red">卖单</span><span class="bk">】</span></span></div>
<div class="td" style="left:164px;line-height:34px">874870</div>
<div class="td" style="left:250px;line-height:34px">875052</div>
<div class="td" style="left:336px;line-height:34px">0.100</div>
<div class="td" style="left:406px;line-height:34px">260.00</div>
<div class="td" style="left:505px;line-height:34px">200.00</div>
<div class="td" style="left:642px;line-height:34px">12/16 08:20:48</div>
<div class="td" style="left:789px;line-height:34px">12/16 08:20:59</div>
<div class="td" style="left:936px;line-height:34px">12/16 08:21:12</div>
<div class="td" style="left:1083px;line-height:34px"><svg class="bi" width="16" height="16" viewBox="0 0 16 16"><path d="M1 1H10V5H15V8.3L7.5 15.5H1Z" fill="#c4d6f2"/><path d="M1 1H10V3H1Z" fill="#dbe6f8"/><path d="M15 11.5V15H11.5Z" fill="#c4d6f2"/><path d="M2.5 6C2.5 4.8 3.5 4.5 4.2 4.6C4.6 3.2 6.5 3.2 7 4.6C7.8 4.6 8.3 5.3 8 6Z" fill="#fff"/><path d="M1 15.5C2.5 11.5 6 9.8 10 11.3L6.8 15.5Z" fill="#52ad35"/><path d="M10.5 15.5L14 12.3C14.6 13 15 14 15 15.5Z" fill="#52ad35"/><path d="M7.5 15.5H0.5V0.5H10.5L15.5 5.5V8" fill="none" stroke="#888" stroke-width="1"/><path d="M15.5 11.5V15.5H11" fill="none" stroke="#888" stroke-width="1"/><path d="M10.5 0.5V4.5H15.5" fill="none" stroke="#888" stroke-width="1"/></svg></div>
<div class="td" style="left:1252px;line-height:34px"><span class="cj">已成交</span></div>
<div class="td" style="left:1486px;line-height:34px"></div>
</div>
<div class="row odd n" style="top:894px;height:35px">
<div class="td" style="left:8px;line-height:34px">141844<span class="cj"><span class="bk">【</span>买单<span class="bk">】</span></span></div>
<div class="td" style="left:164px;line-height:34px">906071</div>
<div class="td" style="left:250px;line-height:34px">945975</div>
<div class="td" style="left:336px;line-height:34px">0.100</div>
<div class="td" style="left:406px;line-height:34px">187.50</div>
<div class="td" style="left:505px;line-height:34px">150.00</div>
<div class="td" style="left:642px;line-height:34px">12/16 08:18:44</div>
<div class="td" style="left:789px;line-height:34px">12/16 09:53:22</div>
<div class="td" style="left:936px;line-height:34px">12/16 09:59:33</div>
<div class="td" style="left:1083px;line-height:34px"><svg class="bi" width="16" height="16" viewBox="0 0 16 16"><path d="M1 1H10V5H15V8.3L7.5 15.5H1Z" fill="#c4d6f2"/><path d="M1 1H10V3H1Z" fill="#dbe6f8"/><path d="M15 11.5V15H11.5Z" fill="#c4d6f2"/><path d="M2.5 6C2.5 4.8 3.5 4.5 4.2 4.6C4.6 3.2 6.5 3.2 7 4.6C7.8 4.6 8.3 5.3 8 6Z" fill="#fff"/><path d="M1 15.5C2.5 11.5 6 9.8 10 11.3L6.8 15.5Z" fill="#52ad35"/><path d="M10.5 15.5L14 12.3C14.6 13 15 14 15 15.5Z" fill="#52ad35"/><path d="M7.5 15.5H0.5V0.5H10.5L15.5 5.5V8" fill="none" stroke="#888" stroke-width="1"/><path d="M15.5 11.5V15.5H11" fill="none" stroke="#888" stroke-width="1"/><path d="M10.5 0.5V4.5H15.5" fill="none" stroke="#888" stroke-width="1"/></svg></div>
<div class="td" style="left:1252px;line-height:34px"><span class="cj">已成交</span></div>
<div class="td" style="left:1486px;line-height:34px"></div>
</div>
<div id="hline"></div>
<div id="footer"></div>
</body>
</html>
